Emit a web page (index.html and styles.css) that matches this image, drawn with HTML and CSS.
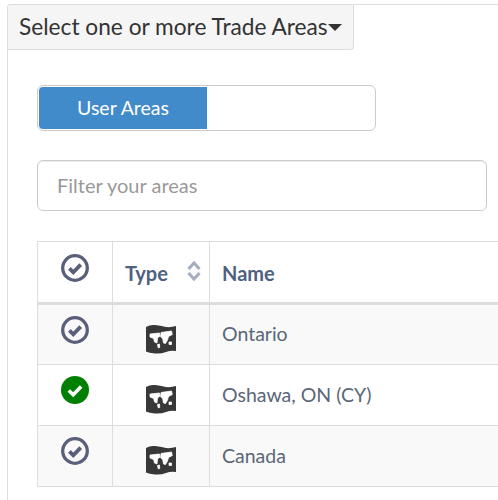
FILE: index.html
```html
<!DOCTYPE html>
<html>
<head>
  <title>Trade Areas</title>
  <link rel="stylesheet" href="styles.css">
</head>
<body>
  <svg class="defs" width="0" height="0">
    <symbol id="check" viewBox="0 0 28 28">
      <circle cx="14" cy="14" r="12.3" fill="none" stroke="currentColor" stroke-width="3.3"/>
      <path d="M8.4 14.400l3.900 3.900 7.400-7.600" fill="none" stroke="currentColor" stroke-width="3.800"/>
    </symbol>
    <symbol id="checked" viewBox="0 0 28 28">
      <circle cx="14" cy="14" r="14" fill="#008000"/>
      <path d="M7.8 14.400l4.400 4.400 8-8.200" fill="none" stroke="#fff" stroke-width="3.600"/>
    </symbol>
    <symbol id="map" viewBox="0 0 30 30">
      <path d="M0 3q4-2.500 9-2t11 2q5 .5 10-1v25q-5-1-10 1t-11 1.500-9-2z" fill="#383838"/>
      <g fill="#fff" stroke="#fff" stroke-width=".8">
        <path d="M4 10l9.500-1 .5 3-2.500 2-.5 5-2.500-1-.8-3.500-3.700-1.500z"/>
        <path d="M11.500 20.500l2-.5 .2 3.500-1.500 .3z"/>
        <path d="M15 8.500l10.500-1.500 .8 3.500-3.800 2-1 3.500-2 3.500-2-.5-.8-4.500-2-1.500z"/>
        <path d="M23 18h2.500v2.500h-2.500z"/>
      </g>
    </symbol>
  </svg>

  <div class="panel">
    <div class="tab">Select one or more Trade Areas<span class="caret"></span></div>

    <div class="panel-body">
      <div class="segmented">
        <div class="segment-on">User Areas</div>
      </div>

      <input class="filter" type="text" placeholder="Filter your areas">

      <table class="areas">
        <thead>
          <tr>
            <th class="col-check"><svg class="icon"><use href="#check"/></svg></th>
            <th class="col-type">
              <div class="sortable">Type
                <svg class="sort" viewBox="0 0 14 22"><path d="M1.500 9l5.500-6 5.500 6M1.500 13l5.500 6 5.500-6" fill="none" stroke="#a6acc0" stroke-width="3"/></svg>
              </div>
            </th>
            <th class="col-name">Name</th>
          </tr>
        </thead>
        <tbody>
          <tr class="odd">
            <td class="col-check"><svg class="icon"><use href="#check"/></svg></td>
            <td class="col-type"><svg class="map"><use href="#map"/></svg></td>
            <td class="col-name">Ontario</td>
          </tr>
          <tr>
            <td class="col-check"><svg class="icon"><use href="#checked"/></svg></td>
            <td class="col-type"><svg class="map"><use href="#map"/></svg></td>
            <td class="col-name">Oshawa, ON (CY)</td>
          </tr>
          <tr class="odd">
            <td class="col-check"><svg class="icon"><use href="#check"/></svg></td>
            <td class="col-type"><svg class="map"><use href="#map"/></svg></td>
            <td class="col-name">Canada</td>
          </tr>
        </tbody>
      </table>
    </div>
  </div>
</body>
</html>
```

FILE: styles.css
```css
body {
  margin: 0;
  overflow: hidden;
  background: #fff;
  font-family: "Lato", "Open Sans", sans-serif;
  color: #333;
}

.defs {
  position: absolute;
}

.panel {
  width: 491px;
  height: 496px;
  margin: 4px 0 0 7px;
  box-sizing: border-box;
  border-top: 1px solid #ddd;
  border-left: 1px solid #ddd;
  border-top-left-radius: 4px;
  overflow: hidden;
}

.tab {
  display: flex;
  align-items: center;
  box-sizing: border-box;
  width: 346px;
  height: 45px;
  padding: 0 0 2px 11px;
  background: #f5f5f5;
  border-right: 1px solid #ddd;
  border-bottom: 1px solid #ddd;
  border-radius: 0 0 4px 0;
  font-size: 22.7px;
  white-space: nowrap;
}

.caret {
  flex: none;
  width: 0;
  height: 0;
  border-top: 7px solid #333;
  border-left: 7px solid transparent;
  border-right: 7px solid transparent;
  margin-top: 2px;
}

.panel-body {
  padding: 35px 0 0 29px;
}

.segmented {
  box-sizing: border-box;
  width: 339px;
  height: 46px;
  padding: 1px;
  border: 1px solid #ccc;
  border-radius: 6px;
}

.segment-on {
  width: 168px;
  height: 42px;
  line-height: 42px;
  text-align: center;
  color: #fff;
  font-size: 19.5px;
  background: #428bca;
  border-radius: 4px 0 0 4px;
}

.filter {
  display: block;
  box-sizing: border-box;
  width: 450px;
  height: 51px;
  margin: 29px 0 30px;
  padding: 0 19px 2px;
  border: 1px solid #ccc;
  border-radius: 6px;
  box-shadow: inset 0 1px 1px rgba(0, 0, 0, 0.075);
  font-family: inherit;
  font-size: 20px;
}

.filter::placeholder {
  color: #999;
}

.areas {
  width: 520px;
  border-collapse: collapse;
  table-layout: fixed;
}

.areas th, .areas td {
  box-sizing: border-box;
  border: 1px solid #ddd;
  padding: 0;
}

.areas th {
  height: 62px;
  border-bottom: 3px solid #ddd;
  color: #4d6180;
  text-align: left;
  font-size: 20px;
  padding-top: 1px;
}

.areas td {
  height: 61px;
  font-size: 19.5px;
  color: #5b6678;
}

.odd td {
  background: #f9f9f9;
}

.col-check {
  width: 75px;
}

.col-type {
  width: 97px;
}

.areas .col-check {
  text-align: center;
  vertical-align: top;
  padding-top: 11px;
}

.areas th.col-check {
  padding-top: 12px;
}

.areas td.col-type {
  text-align: center;
  padding-top: 8px;
}

.areas .col-name {
  padding-left: 12px;
}

.areas td.col-name {
  padding-bottom: 2px;
}

.sortable {
  display: flex;
  align-items: center;
  justify-content: space-between;
  padding: 0 8px 0 12px;
}

.sort {
  width: 14px;
  height: 22px;
  margin-top: -4px;
}

.icon {
  display: block;
  width: 28px;
  height: 28px;
  margin: 0 auto;
  color: #5a607a;
}

.map {
  display: block;
  width: 30px;
  height: 30px;
  margin: 0 auto;
}
```
